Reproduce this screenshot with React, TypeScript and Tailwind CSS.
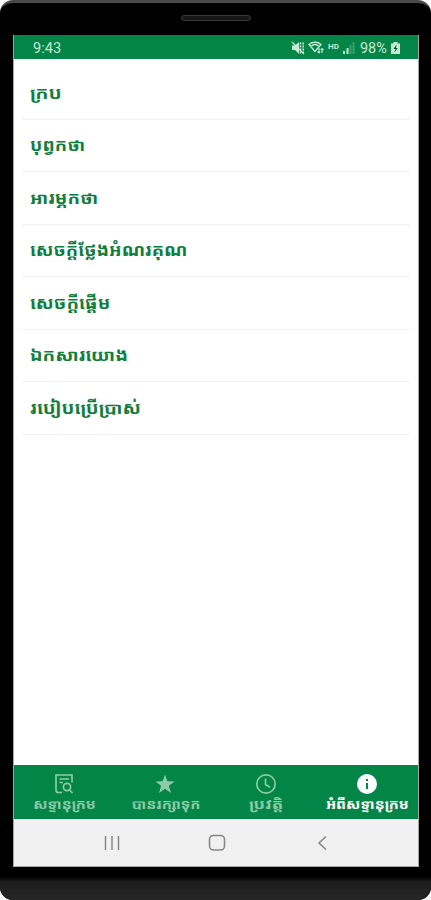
import type { ReactNode } from "react";

interface MenuItem {
  label: string;
  className: string;
}

interface TabProps {
  label: string;
  icon: ReactNode;
  active?: boolean;
  className?: string;
}

const ITEMS: MenuItem[] = [
  { label: "ក្រប", className: "scale-x-[1.22]" },
  { label: "បុព្វកថា", className: "scale-x-[1.14]" },
  { label: "អារម្ភកថា", className: "scale-x-[1.155]" },
  { label: "សេចក្ដីថ្លែងអំណរគុណ", className: "scale-x-[1.14]" },
  { label: "សេចក្ដីផ្ដើម", className: "scale-x-[1.16]" },
  { label: "ឯកសារយោង", className: "scale-x-[1.165]" },
  { label: "របៀបប្រើប្រាស់", className: "scale-x-[1.19]" },
];

function StatusBar() {
  return (
    <div className="flex h-[24px] shrink-0 items-center bg-[#048548] pr-[18px] pl-[19px] font-[Roboto,sans-serif] text-[14px] leading-none text-[#c5ead3]">
      <span className="mt-[2px] origin-left scale-x-[1.04]">9:43</span>
      <div className="mt-px ml-auto flex items-center">
        {/* muted speaker */}
        <svg width="14" height="14" viewBox="0 0 14 14" className="mr-[3px]">
          <path d="M1 4.500h3l4-3.500v12L4 9H1z" fill="currentColor" />
          <path d="M1 1l12 12" stroke="currentColor" strokeWidth="1.2" />
          <path d="M9.500 1.500v11M12.200 1.500v11" stroke="currentColor" strokeWidth="1.600" strokeDasharray="2 1" />
        </svg>
        <svg width="16" height="14" viewBox="0 0 16 14" className="mr-[4px]" fill="none" stroke="currentColor">
          <path d="M1 3.500C4 .5 10 .5 13 3.500L7 10.500z" strokeWidth="1.3" />
          <path d="M3.500 5c2-1.800 5-1.800 7 0" strokeWidth="1.600" />
          <path d="M11 7v5M9.500 10.500L11 12l1.200-1.500M14 12V7.500M12.700 9L14 7.500 15.500 9" strokeWidth="1.100" />
        </svg>
        <span className="mr-[3px] w-[11px] origin-left scale-x-[1.15] text-[7px] font-bold">HD</span>
        <svg width="13" height="12" viewBox="0 0 13 12" className="mt-px mr-[5px]" fill="currentColor">
          <path d="M1 9h2v3H1zM4.500 6h2v6h-2z" />
          <path d="M7.500 3h2v9h-2zM10.500 0h2v12h-2z" opacity=".28" />
        </svg>
        <span className="mt-px w-[29px] origin-left scale-x-[1.03] text-[14px]">98%</span>
        <svg width="9" height="12" viewBox="0 0 9 12" className="ml-[2px]">
          <path d="M2.500 0h4v1.500H9V12H0V1.500h2.500z" fill="currentColor" />
          <path d="M5.500 2.500L2.500 7h2L3.500 10.500 6.800 6H5z" fill="#075a32" />
        </svg>
      </div>
    </div>
  );
}

function Tab({ label, icon, active, className = "" }: TabProps) {
  return (
    <div
      className={`flex w-[101px] shrink-0 flex-col items-center pt-[8px] ${
        active ? "text-white" : "text-[#8ccba5]"
      }`}
    >
      <div className="mr-[2px] flex h-[22px] items-center justify-center">{icon}</div>
      <span
        className={`h-[18px] text-[13px] leading-[18px] font-bold whitespace-nowrap ${className}`}
      >
        {label}
      </span>
    </div>
  );
}

function DictionaryIcon() {
  return (
    <svg width="20" height="22" viewBox="0 0 20 22" fill="none" stroke="currentColor" strokeWidth="1.700">
      <path d="M8 19.500H4.500Q2 19.500 2 17.500V2H18V9.500" />
      <path d="M5.500 6H15M5.500 9.500H9" />
      <circle cx="13" cy="14" r="3.600" />
      <path d="M15.500 17L18.500 20" />
    </svg>
  );
}

export default function App() {
  return (
    <div className="h-[900px] w-[431px] overflow-hidden bg-white font-['Noto_Sans_Khmer','Khmer_OS','Noto_Sans','DejaVu_Sans',sans-serif]">
      <div className="flex h-full flex-col overflow-hidden rounded-[13px] border-t-[3px] border-[#4a4a4a] bg-black">
        <div className="flex h-[32px] shrink-0 justify-center">
          <div className="mt-[12px] h-[6px] w-[70px] rounded-[3px] border border-[#393939] bg-[#161616]" />
        </div>
        <div className="mr-[12px] ml-[13px] flex h-[832px] shrink-0 flex-col border-r border-b border-l border-[#a5a5a5] bg-white">
          <StatusBar />
          <div className="flex-1 px-[8px] pt-[8px]">
            {ITEMS.map((item) => (
              <div
                key={item.label}
                className="flex h-[52.5px] items-center border-b border-[#f2f2f2] pl-[8px]"
              >
                <span
                  className={`origin-left text-[16px] leading-[28px] font-bold whitespace-nowrap text-[#117d3c] ${item.className}`}
                >
                  {item.label}
                </span>
              </div>
            ))}
          </div>
          <div className="flex h-[54px] shrink-0 bg-[#048548]">
            <Tab label="សទ្ទានុក្រម" icon={<DictionaryIcon />} className="scale-x-[1.14]" />
            <Tab
              label="បានរក្សាទុក"
              className="scale-x-[1.15]"
              icon={
                <svg width="20" height="20" viewBox="0 0 20 20" fill="currentColor">
                  <path d="M10 .5l2.400 6.700 7.200.2-5.700 4.400 2.100 7.200L10 14.800 4 19l2.100-7.200L.4 7.400l7.200-.2z" />
                </svg>
              }
            />
            <Tab
              label="ប្រវត្តិ"
              className="scale-x-[1.3]"
              icon={
                <svg width="22" height="22" viewBox="0 0 22 22" fill="none" stroke="currentColor" strokeWidth="1.700">
                  <circle cx="11" cy="11" r="9.200" />
                  <path d="M10.500 5.500V11.500L15 14.200" />
                </svg>
              }
            />
            <Tab
              label="អំពីសទ្ទានុក្រម"
              active
              className="scale-x-[1.14]"
              icon={
                <svg width="20" height="20" viewBox="0 0 20 20">
                  <circle cx="10" cy="10" r="10" fill="currentColor" />
                  <path d="M9 5h2v2H9zM9 9h2v6H9z" fill="#048548" />
                </svg>
              }
            />
          </div>
          <div className="flex h-[47px] shrink-0 items-center bg-[#f1f1f1] text-[#888]">
            <svg width="16" height="16" viewBox="0 0 16 16" className="ml-[90px]" stroke="currentColor" strokeWidth="1.500">
              <path d="M1.500 1v14M8 1v14M14.500 1v14" />
            </svg>
            <svg width="18" height="18" viewBox="0 0 18 18" className="ml-[88px]" fill="none" stroke="currentColor" strokeWidth="1.600">
              <rect x="1.500" y="1.500" width="15" height="14.500" rx="4" />
            </svg>
            <svg width="10" height="16" viewBox="0 0 10 16" className="ml-[91px]" fill="none" stroke="currentColor" strokeWidth="1.600">
              <path d="M9 1.500L2 8l7 6.500" />
            </svg>
          </div>
        </div>
        <div className="flex-1 bg-linear-to-b from-black from-20% via-[#1d1d1d] via-45% to-[#262626]" />
      </div>
    </div>
  );
}
